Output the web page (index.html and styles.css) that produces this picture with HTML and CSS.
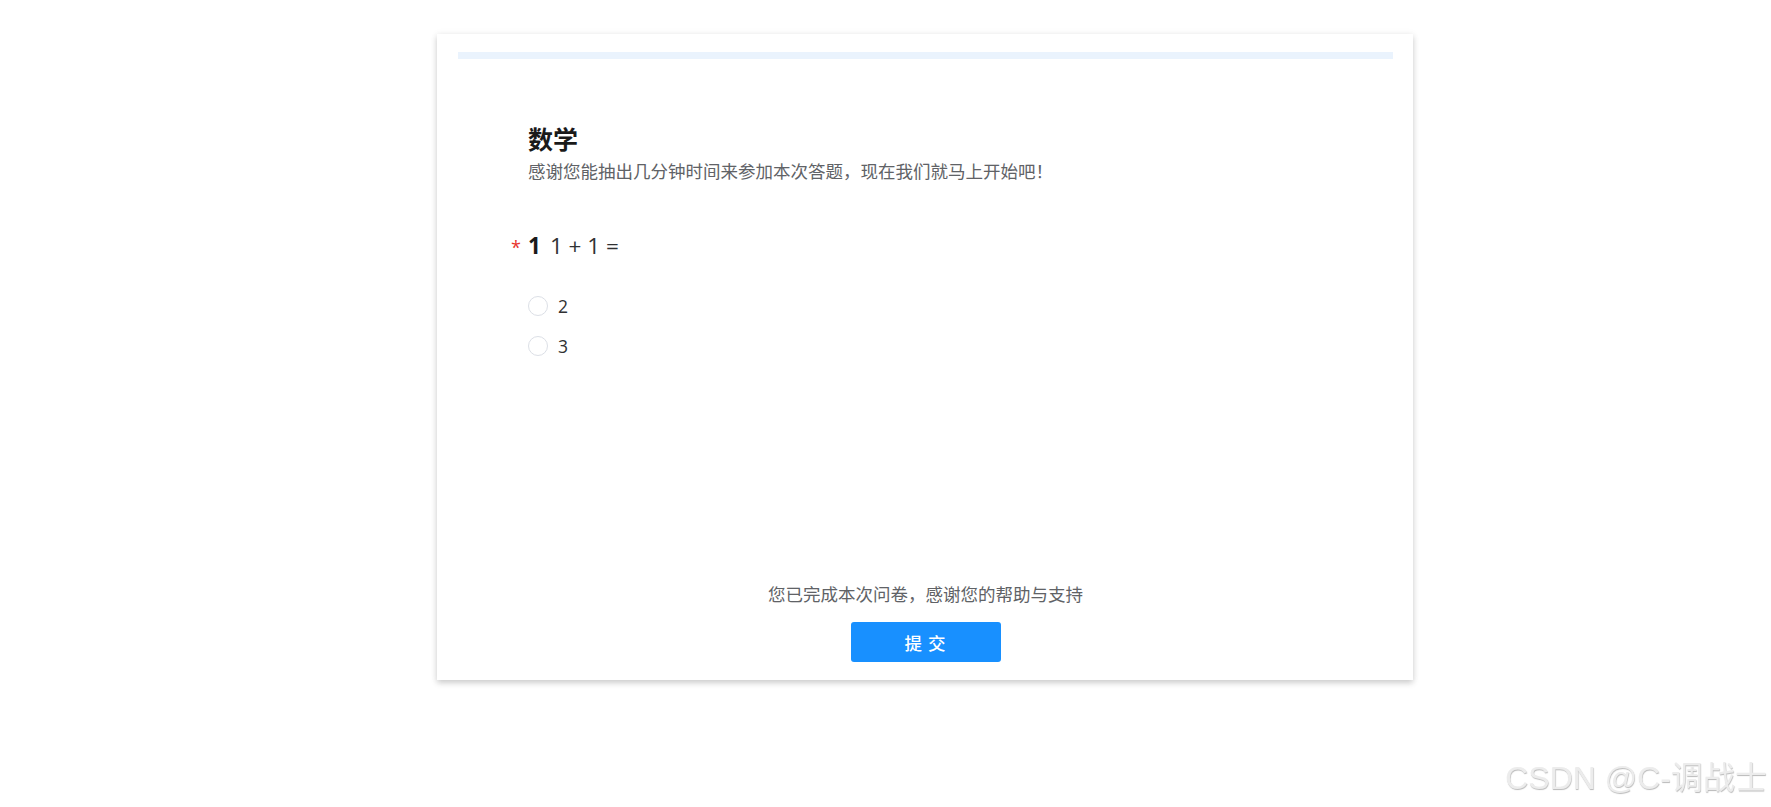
FILE: index.html
```html
<!DOCTYPE html>
<html lang="zh-CN">
<head>
<meta charset="utf-8">
<title>数学</title>
<link rel="stylesheet" href="styles.css">
</head>
<body>
<div class="page">
  <div class="card">
    <div class="topbar"></div>
    <div class="content">
      <h1 class="title">数学</h1>
      <p class="desc">感谢您能抽出几分钟时间来参加本次答题，现在我们就马上开始吧！</p>
      <div class="question">
        <span class="req">*</span>
        <span class="qnum">1</span>
        <span class="qtext">1 + 1 =</span>
      </div>
      <div class="options">
        <label class="option"><span class="radio"></span><span class="olabel">2</span></label>
        <label class="option"><span class="radio"></span><span class="olabel">3</span></label>
      </div>
    </div>
    <div class="footer">
      <p class="done">您已完成本次问卷，感谢您的帮助与支持</p>
      <button class="submit">提 交</button>
    </div>
  </div>
</div>
<div class="watermark">CSDN @C-调战士</div>
</body>
</html>
```
FILE: styles.css
```css
html, body {
  margin: 0;
  padding: 0;
  background: #ffffff;
}
body {
  font-family: "Open Sans", "Noto Sans CJK SC", sans-serif;
  color: #303133;
  min-height: 807px;
}
.page {
  display: flex;
  justify-content: center;
  padding-top: 34px;
  padding-left: 79px;
  padding-bottom: 40px;
}
.card {
  width: 976px;
  height: 646px;
  flex: none;
  box-sizing: border-box;
  padding: 18px 20px 18px 21px;
  background: #fff;
  box-shadow: 0 3px 6px rgba(0, 0, 0, 0.18), 0 0 8px rgba(0, 0, 0, 0.05);
  display: flex;
  flex-direction: column;
}
.topbar {
  height: 7px;
  background: #eaf3fd;
}
.content {
  padding-left: 70px;
}
.title {
  margin: 62px 0 0 0;
  font-family: "Noto Sans CJK SC", sans-serif;
  font-size: 25px;
  line-height: 34px;
  font-weight: 700;
  color: #1a1a1a;
}
.desc {
  margin: 3px 0 0 0;
  font-family: "Noto Sans CJK SC", sans-serif;
  font-size: 17.5px;
  line-height: 26px;
  color: #606266;
}
.question {
  margin-top: 46px;
  display: flex;
  align-items: baseline;
  font-size: 22.5px;
  line-height: 32px;
  margin-left: -17px;
}
.req {
  color: #e8342c;
  font-size: 18px;
  width: 17px;
}
.qnum {
  font-weight: 700;
  color: #1a1a1a;
  margin-right: 9px;
}
.qtext {
  color: #303133;
}
.options {
  margin-top: 33px;
  display: flex;
  flex-direction: column;
  gap: 20px;
}
.option {
  display: flex;
  align-items: center;
  height: 20px;
  font-size: 17.5px;
  color: #303133;
}
.radio {
  width: 20px;
  height: 20px;
  box-sizing: border-box;
  border: 1px solid #dcdfe6;
  border-radius: 50%;
  margin-right: 10px;
}
.footer {
  margin-top: auto;
  display: flex;
  flex-direction: column;
  align-items: center;
}
.done {
  margin: 0 0 15px 0;
  font-family: "Noto Sans CJK SC", sans-serif;
  font-size: 17.5px;
  line-height: 26px;
  color: #606266;
}
.submit {
  width: 150px;
  height: 40px;
  border: none;
  border-radius: 3px;
  background: #1890ff;
  color: #fff;
  font-family: "Noto Sans CJK SC", sans-serif;
  font-size: 17.5px;
  font-weight: 500;
  letter-spacing: 1px;
  padding: 0;
}
.watermark {
  position: fixed;
  right: 4px;
  bottom: 11px;
  font-family: "Liberation Sans", "Noto Sans CJK SC", sans-serif;
  font-size: 32px;
  line-height: 36px;
  color: #ececec;
  text-shadow: 0.5px 0.5px 1px rgba(0, 0, 0, 0.28);
}
```
